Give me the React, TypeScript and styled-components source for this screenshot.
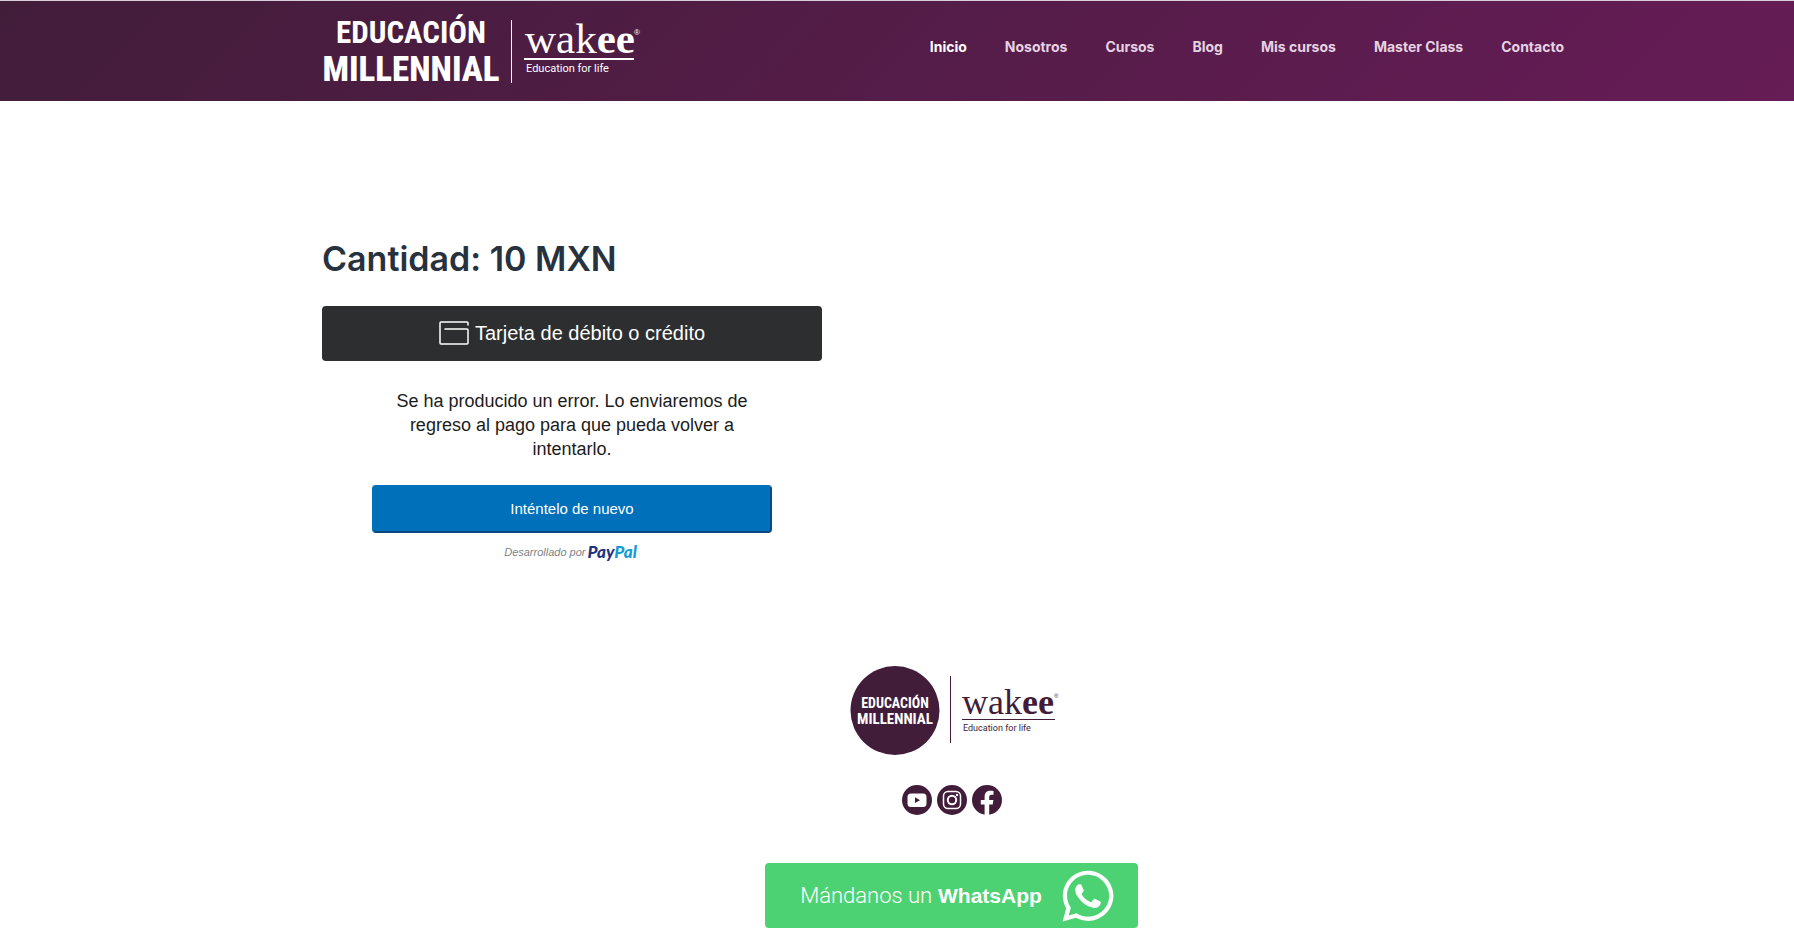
import React from "react";
import styled, { createGlobalStyle } from "styled-components";
import { FaWhatsapp } from "react-icons/fa";

const plum = "#421d3a";
const sans = `"Liberation Sans", Arial, sans-serif`;
const grotesk = `Inter, "Liberation Sans", sans-serif`;
const narrow = `"Roboto Condensed", "Liberation Sans", sans-serif`;
const light = `Roboto, "Liberation Sans", sans-serif`;

const GlobalStyle = createGlobalStyle`
  *, *::before, *::after { box-sizing: border-box; }
  body { margin: 0; background: #fff; font-family: ${sans}; overflow-x: hidden; }
  h1, p { margin: 0; }
`;

const Header = styled.header`
  border-top: 1px solid #d9cfdb;
  background: linear-gradient(135deg, #421d3a 0%, #661c56 100%);
`;

const Container = styled.div`
  padding: 0 213px 0 322px;
`;

const HeaderRow = styled(Container)`
  display: flex;
  justify-content: space-between;
  align-items: flex-start;
  height: 100px;
`;

const Nav = styled.nav`
  display: flex;
  gap: 38px;
  padding: 36px 17px 0 0;
`;

const NavLink = styled.a<{ $active?: boolean }>`
  color: ${(p) => (p.$active ? "#fff" : "#e6d3e2")};
  font: 700 14px/20px ${grotesk};
  text-decoration: none;
  white-space: nowrap;
`;

const LogoLink = styled.a`
  display: block;
  svg { display: block; }
`;

const Checkout = styled.section`
  display: flex;
  flex-direction: column;
  width: 500px;
  padding-top: 136px;
`;

const Amount = styled.h1`
  color: #28323e;
  font: 600 34px/44px ${grotesk};
  white-space: nowrap;
`;

const CardButton = styled.button`
  display: flex;
  align-items: center;
  justify-content: center;
  gap: 6px;
  height: 55px;
  margin-top: 25px;
  padding: 0 0 2px;
  border: 0;
  border-radius: 4px;
  background: #2c2e2f;
  color: #fff;
  font: 20px/24px ${sans};
`;

const ErrorPanel = styled.div`
  display: flex;
  flex-direction: column;
  align-items: center;
  padding: 28px 50px 0;
`;

const ErrorText = styled.p`
  width: 360px;
  color: #1c1c1c;
  font: 18px/24px ${sans};
  text-align: center;
`;

const RetryButton = styled.button`
  width: 100%;
  height: 48px;
  margin-top: 24px;
  border: 2px solid;
  border-color: #0070ba #0a4880 #0a4880 #0070ba;
  border-radius: 4px;
  background: #0070ba;
  color: #fff;
  font: 15px/20px ${sans};
`;

const Powered = styled.p`
  display: flex;
  align-items: center;
  gap: 2px;
  margin-top: 9px;
  padding-right: 3px;
  color: #7b8388;
  font: italic 11px/20px ${sans};
`;

const PayPal = styled.strong`
  color: #1f3480;
  font: italic 900 17px/20px Lato, ${sans};
  span { color: #179bd7; }
`;

const Footer = styled.footer`
  display: flex;
  flex-direction: column;
  align-items: center;
  padding-top: 104px;
`;

const Social = styled.div`
  display: flex;
  gap: 5px;
  margin: 30px 0 48px;
  a { display: block; }
  svg { display: block; }
`;

const WhatsAppLink = styled.a`
  display: flex;
  align-items: center;
  gap: 17px;
  height: 65px;
  padding: 0 21px 0 35px;
  border-radius: 4px;
  background: #4dd273;
  color: #fff;
  font: 21px/28px ${sans};
  text-decoration: none;
  white-space: nowrap;
  svg { width: 58px; height: 58px; }
`;

const Thin = styled.span`
  font: 300 22px/28px ${light};
`;

function HeaderLogo() {
  return (
    <svg width="322" height="96" viewBox="1 0 322 96" fill="#fff" role="img" aria-label="Educación Millennial, Wakee">
      <text x="90" y="42" textAnchor="middle" fontFamily={narrow} fontWeight="700" fontSize="31">EDUCACIÓN</text>
      <text x="90" y="80" textAnchor="middle" fontFamily={narrow} fontWeight="800" fontSize="35">MILLENNIAL</text>
      <rect x="190" y="19" width="1" height="63" />
      <text x="204" y="52" fontFamily="Liberation Serif, serif" fontSize="43">wak<tspan fontWeight="700">ee</tspan></text>
      <text x="313" y="34" fontFamily={sans} fontSize="8">®</text>
      <rect x="203" y="57" width="110" height="2" />
      <text x="205" y="71" fontFamily={light} fontSize="11">Education for life</text>
    </svg>
  );
}

function FooterLogo() {
  return (
    <svg width="217" height="89" viewBox="-7 0 217 89" fill={plum} role="img" aria-label="Educación Millennial, Wakee">
      <circle cx="45" cy="44.5" r="44.5" />
      <g fill="#fff" textAnchor="middle" fontFamily={narrow} fontWeight="700">
        <text x="45" y="42" fontSize="14">EDUCACIÓN</text>
        <text x="45" y="58" fontSize="15">MILLENNIAL</text>
      </g>
      <rect x="100" y="10" width="1" height="67" />
      <text x="112" y="48" fontFamily="Liberation Serif, serif" fontSize="36">wak<tspan fontWeight="700">ee</tspan></text>
      <text x="204" y="32" fontFamily={sans} fontSize="6">®</text>
      <rect x="112" y="53" width="93" height="1" />
      <text x="113" y="65" fontFamily={light} fontSize="9">Education for life</text>
    </svg>
  );
}

function CardIcon() {
  return (
    <svg width="30" height="24" viewBox="0 0 30 24" fill="none" stroke="#fff" strokeWidth="1.5" strokeLinecap="round" strokeLinejoin="round" aria-hidden="true">
      <path d="M29 4V2a1 1 0 0 0-1-1H2a1 1 0 0 0-1 1v20a1 1 0 0 0 1 1h26a1 1 0 0 0 1-1V9a1 1 0 0 0-1-1H6" />
    </svg>
  );
}

function YouTubeIcon() {
  return (
    <svg width="30" height="30" viewBox="0 0 30 30" aria-hidden="true">
      <circle cx="15" cy="15" r="15" fill={plum} />
      <rect x="5.5" y="8.5" width="19" height="13.5" rx="3.5" fill="#fff" />
      <path d="M13 12.3v5.8l5-2.9z" fill={plum} />
    </svg>
  );
}

function InstagramIcon() {
  return (
    <svg width="30" height="30" viewBox="0 0 30 30" aria-hidden="true">
      <circle cx="15" cy="15" r="15" fill={plum} />
      <g fill="none" stroke="#fff">
        <rect x="6.5" y="6.5" width="17" height="17" rx="4.5" strokeWidth="1.5" />
        <circle cx="15" cy="15" r="4.2" strokeWidth="2" />
      </g>
      <circle cx="20" cy="10" r="1.2" fill="#fff" />
    </svg>
  );
}

function FacebookIcon() {
  return (
    <svg width="30" height="30" viewBox="0 0 30 30" aria-hidden="true">
      <circle cx="15" cy="15" r="15" fill={plum} />
      <path d="M12.6 30V19.4H8.8V15h3.8v-3.4c0-3.8 2.3-5.8 5.7-5.8 1.2 0 2.3.1 3.2.3v3.7h-1.9c-1.9 0-2.4 1-2.4 2.3V15h4.2l-.7 4.4h-3.5V30z" fill="#fff" />
    </svg>
  );
}

const links = ["Inicio", "Nosotros", "Cursos", "Blog", "Mis cursos", "Master Class", "Contacto"];

export default function App() {
  return (
    <>
      <GlobalStyle />
      <Header>
        <HeaderRow>
          <LogoLink href="#"><HeaderLogo /></LogoLink>
          <Nav>
            {links.map((label, i) => (
              <NavLink key={label} href="#" $active={i === 0}>{label}</NavLink>
            ))}
          </Nav>
        </HeaderRow>
      </Header>
      <Container as="main">
        <Checkout>
          <Amount>Cantidad: 10 MXN</Amount>
          <CardButton type="button"><CardIcon />Tarjeta de débito o crédito</CardButton>
          <ErrorPanel>
            <ErrorText>Se ha producido un error. Lo enviaremos de regreso al pago para que pueda volver a intentarlo.</ErrorText>
            <RetryButton type="button">Inténtelo de nuevo</RetryButton>
            <Powered>Desarrollado por <PayPal>Pay<span>Pal</span></PayPal></Powered>
          </ErrorPanel>
        </Checkout>
        <Footer>
          <FooterLogo />
          <Social>
            <a href="#" aria-label="YouTube"><YouTubeIcon /></a>
            <a href="#" aria-label="Instagram"><InstagramIcon /></a>
            <a href="#" aria-label="Facebook"><FacebookIcon /></a>
          </Social>
          <WhatsAppLink href="#">
            <span><Thin>Mándanos un</Thin> <strong>WhatsApp</strong></span>
            <FaWhatsapp aria-hidden="true" />
          </WhatsAppLink>
        </Footer>
      </Container>
    </>
  );
}
